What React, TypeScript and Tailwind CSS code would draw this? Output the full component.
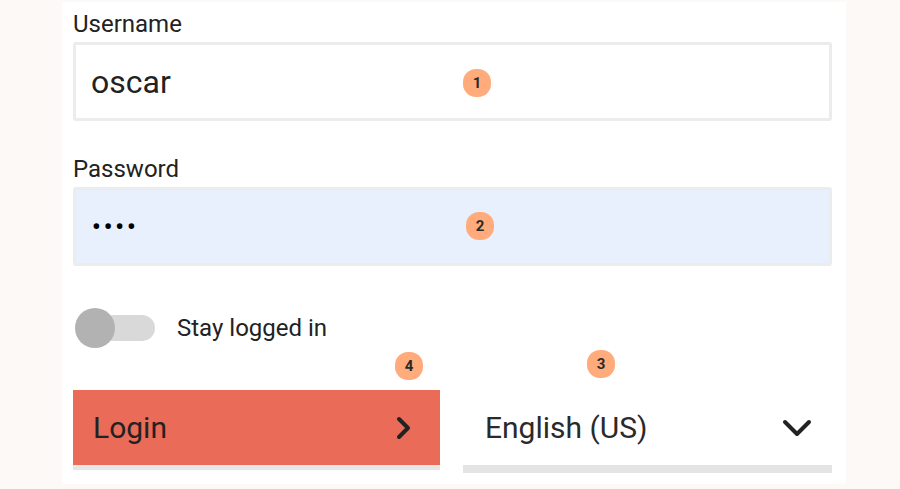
import React from "react";

function Badge({ n, className }: { n: string; className: string }) {
  return (
    <div
      className={`absolute w-[28px] h-[28px] rounded-[13px] bg-[#ffab7b] flex items-center justify-center text-[15px] font-bold text-[#2a2a2a] leading-none ${className}`}
    >
      {n}
    </div>
  );
}

export default function App() {
  return (
    <div
      className="w-[900px] h-[489px] bg-[#fdf9f6] pl-[62px] pt-[2px] overflow-hidden"
      style={{ fontFamily: "Roboto, 'Noto Sans', sans-serif" }}
    >
      <div className="relative w-[784px] h-[482px] bg-white pl-[11px] pr-[14px] text-[#222222]">
        <div className="pt-[8px]">
          <label className="block text-[24px] leading-[28px] font-normal">Username</label>
          <div className="mt-[4px] h-[79px] border-[3px] border-[#ececec] rounded-[3px] flex items-center pl-[15px]">
            <span className="text-[32px] font-normal leading-none">oscar</span>
          </div>
        </div>
        <div className="mt-[34px]">
          <label className="block text-[24px] leading-[28px] font-normal">Password</label>
          <div className="mt-[4px] h-[79px] border-[3px] border-[#ececec] rounded-[3px] bg-[#e8f0fe] flex items-center pl-[16px]">
            <span className="text-[24px] font-bold leading-none tracking-[3px] text-black">••••</span>
          </div>
        </div>
        <div className="mt-[42px] flex items-center h-[40px]">
          <div className="relative w-[80px] h-[40px] ml-[2px] flex items-center">
            <div className="ml-[25px] w-[55px] h-[26px] rounded-full bg-[#d9d9d9]" />
            <div className="absolute left-0 top-0 w-[40px] h-[40px] rounded-full bg-[#b2b2b2]" />
          </div>
          <span className="ml-[22px] text-[24px] font-normal leading-none">Stay logged in</span>
        </div>
        <div className="mt-[42px] grid grid-cols-[367px_369px] gap-[23px]">
          <button className="h-[75px] bg-[#e96b58] shadow-[0_5px_0_#e6e6e6] flex items-center justify-between pl-[20px] pr-[28px] text-[#222222]">
            <span className="text-[30px] font-normal leading-none">Login</span>
            <svg width="16" height="24" viewBox="0 0 16 24">
              <polyline points="3,3 12,12 3,21" fill="none" stroke="#222" strokeWidth="4" strokeLinecap="round" strokeLinejoin="round" />
            </svg>
          </button>
          <div className="h-[83px] flex flex-col">
            <div className="h-[75px] flex items-center justify-between pl-[22px] pr-[20px]">
              <span className="text-[30px] font-normal leading-none text-[#2a2a2a]">English (US)</span>
              <svg width="30" height="20" viewBox="0 0 30 20">
                <polyline points="3,4 15,16 27,4" fill="none" stroke="#222" strokeWidth="4" strokeLinecap="round" strokeLinejoin="round" />
              </svg>
            </div>
            <div className="h-[8px] bg-[#e4e4e4]" />
          </div>
        </div>
        <Badge n="1" className="left-[401px] top-[67px]" />
        <Badge n="2" className="left-[404px] top-[210px]" />
        <Badge n="4" className="left-[333px] top-[350px]" />
        <Badge n="3" className="left-[525px] top-[348px]" />
      </div>
    </div>
  );
}
